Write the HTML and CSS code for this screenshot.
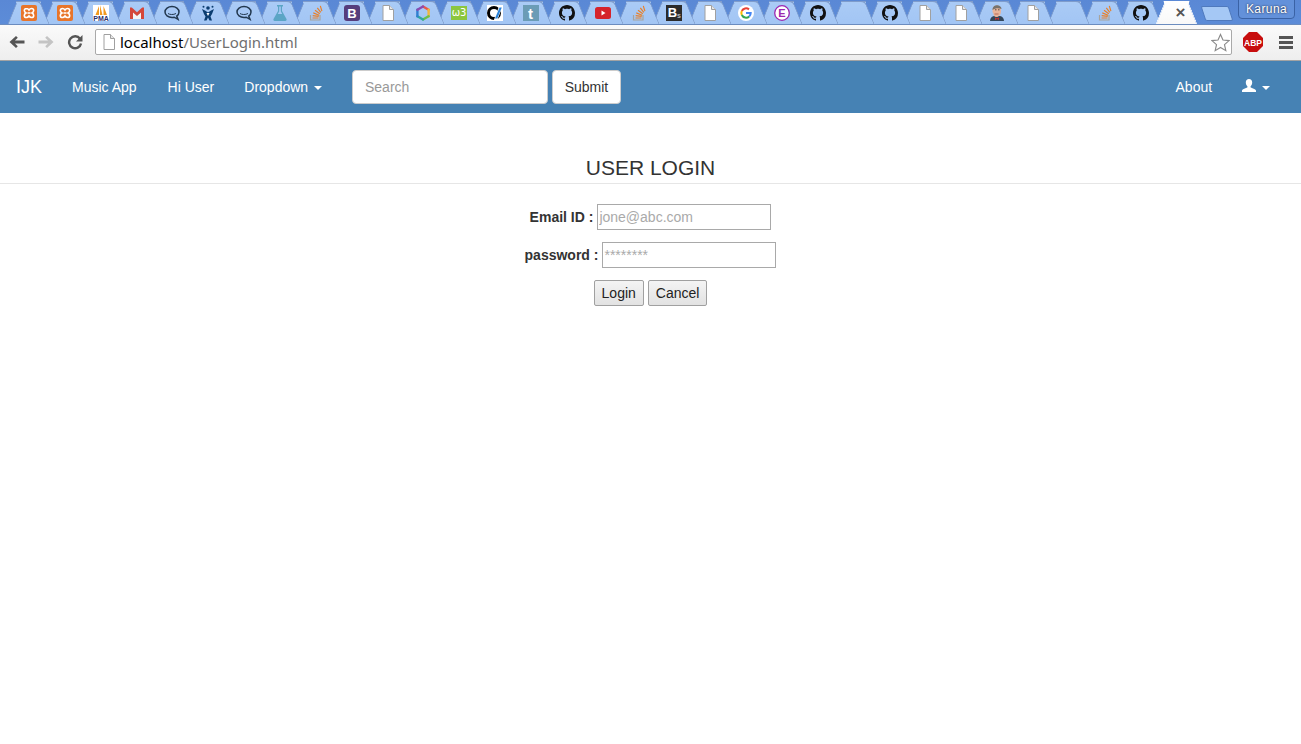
FILE: index.html
```html
<!DOCTYPE html>
<html lang="en">
   <head>
      <meta charset="UTF-8">
      <title>User Login</title>
      <link rel="stylesheet" href="styles.css">
   </head>
   <body>
      <svg class="sprite" xmlns="http://www.w3.org/2000/svg">
         <symbol id="i-xampp" viewBox="0 0 16 16">
            <rect width="16" height="16" rx="2" fill="#e8752a"/>
            <path d="M5.500 3.500c-1.400 0-2.200.9-2.200 2.100 0 1 .6 1.800 1.700 2.400-1.100.6-1.700 1.400-1.700 2.400 0 1.200.8 2.100 2.200 2.100 1.100 0 1.900-.6 2.500-1.500.6.900 1.400 1.500 2.500 1.500 1.400 0 2.200-.9 2.200-2.100 0-1-.6-1.800-1.700-2.400 1.100-.6 1.700-1.400 1.700-2.400 0-1.200-.8-2.100-2.200-2.100-1.100 0-1.900.6-2.500 1.500-.6-.9-1.400-1.500-2.500-1.500z" fill="none" stroke="#fff" stroke-width="1.600"/>
            <path d="M6.500 8h3" stroke="#fff" stroke-width="1.600"/>
         </symbol>
         <symbol id="i-gmail" viewBox="0 0 16 16">
            <path d="M4 14V7l4 3.500L12 7v7z" fill="#f4f4f4"/>
            <path d="M1 14V2.500h1.800L8 7.200l5.200-4.700H15V14h-3V7.500l-4 3.600-4-3.600V14z" fill="#d5473a"/>
         </symbol>
         <symbol id="i-chat" viewBox="0 0 16 16">
            <path d="M8 1.500c3.900 0 7 2.400 7 5.500 0 1.700-.9 3.100-2.300 4.100l1.300 3.200-3.800-2.100c-.7.200-1.400.300-2.200.300-3.900 0-7-2.400-7-5.500S4.100 1.500 8 1.500z" fill="none" stroke="#22384f" stroke-width="1.500"/>
            <path d="M4 8.500c1.500 1.200 5.500 1.500 8 0" fill="none" stroke="#22384f" stroke-width="1"/>
         </symbol>
         <symbol id="i-jira" viewBox="0 0 16 16">
            <circle cx="8" cy="3" r="1.800" fill="#0b3d70"/>
            <circle cx="3.500" cy="1.800" r="1" fill="#0b3d70"/>
            <circle cx="12.500" cy="1.800" r="1" fill="#0b3d70"/>
            <path d="M2 4l3 1.500 3 2 3-2L14 4l-2 5-1.500 2.500 1.500 4H9.500L8 12.500 6.500 15.500H4l1.500-4L4 9z" fill="#0b3d70"/>
            <path d="M6.500 8h3L8 11z" fill="#fff"/>
         </symbol>
         <symbol id="i-flask" viewBox="0 0 16 16">
            <path d="M5 0h6v1.500h-1V6l4.500 8c.5.900-.2 2-1.200 2H2.700c-1 0-1.700-1.100-1.200-2L6 6V1.500H5z" fill="#5ba5c5"/>
            <path d="M7.200 1.500h1.600v4.800L10.200 9H5.800l1.400-2.700z" fill="#a5c8f5"/>
         </symbol>
         <symbol id="i-so" viewBox="0 0 16 16">
            <path d="M2.500 10v5h9.500v-5" fill="none" stroke="#a8a49c" stroke-width="1.200"/>
            <path d="M4.500 13h6M4.700 10.600l6 .8M5.300 7.900l5.800 2.300M7 5.200l4.800 3.500M9.300 2.800l3.500 4.600M12.300 .8l1.600 5.400" fill="none" stroke="#e8802a" stroke-width="1.200"/>
         </symbol>
         <symbol id="i-doc" viewBox="0 0 16 16">
            <path d="M3 .5h6.500L13.500 4.500v11H3z" fill="#fff" stroke="#a0a0a0"/>
            <path d="M9.500 .5v4h4" fill="#e6e6e6" stroke="#a0a0a0"/>
         </symbol>
         <symbol id="i-hex" viewBox="0 0 16 16">
            <path d="M8 1.500 13.600 4.700" fill="none" stroke="#e8574a" stroke-width="2.400" stroke-linecap="round"/>
            <path d="M13.600 4.700V11.300" fill="none" stroke="#f2b63c" stroke-width="2.400" stroke-linecap="round"/>
            <path d="M13.600 11.300 8 14.500" fill="none" stroke="#6cbf4b" stroke-width="2.400" stroke-linecap="round"/>
            <path d="M8 14.500 2.400 11.300" fill="none" stroke="#2fa7a0" stroke-width="2.400" stroke-linecap="round"/>
            <path d="M2.400 11.300V4.700" fill="none" stroke="#2f7fd1" stroke-width="2.400" stroke-linecap="round"/>
            <path d="M2.400 4.700 8 1.500" fill="none" stroke="#8a4bb0" stroke-width="2.400" stroke-linecap="round"/>
         </symbol>
         <symbol id="i-slash" viewBox="0 0 16 16">
            <rect width="16" height="16" fill="#fff"/>
            <circle cx="7" cy="8" r="5.500" fill="none" stroke="#000" stroke-width="3"/>
            <path d="M6.500 16 12.500 0H16L10 16z" fill="#fff"/>
            <path d="M8 13.500 12.500 2.500h2.300L10.300 13.500z" fill="#2a82d8"/>
         </symbol>
         <symbol id="i-github" viewBox="0 0 16 16">
            <path fill="#111" d="M8 0C3.580 0 0 3.580 0 8c0 3.540 2.290 6.530 5.470 7.590.4.070.55-.17.55-.38 0-.19-.01-.82-.01-1.490-2.010.37-2.530-.49-2.690-.94-.09-.23-.48-.94-.82-1.130-.28-.15-.68-.52-.01-.53.63-.01 1.080.58 1.230.82.720 1.210 1.870.87 2.330.66.070-.52.280-.87.510-1.070-1.780-.2-3.640-.89-3.640-3.950 0-.87.310-1.590.820-2.150-.08-.2-.36-1.020.08-2.120 0 0 .67-.21 2.200.82.640-.18 1.320-.27 2-.27.680 0 1.360.09 2 .27 1.530-1.040 2.200-.82 2.200-.82.440 1.100.160 1.920.080 2.120.510.560.820 1.270.820 2.150 0 3.070-1.870 3.750-3.650 3.950.290.250.540.730.540 1.480 0 1.070-.01 1.930-.01 2.200 0 .21.150.46.550.38A8.013 8.013 0 0016 8c0-4.420-3.580-8-8-8z"/>
         </symbol>
         <symbol id="i-yt" viewBox="0 0 16 16">
            <rect y="2" width="16" height="12" rx="2.500" fill="#d5232b"/>
            <path d="M6.500 5.500 10.500 8l-4 2.500z" fill="#fff"/>
         </symbol>
         <symbol id="i-google" viewBox="0 0 16 16">
            <circle cx="8" cy="8" r="8" fill="#fff"/>
            <path d="M3.800 6A4.700 4.700 0 0 1 11 4.400" fill="none" stroke="#e94235" stroke-width="2"/>
            <path d="M3.800 10A4.700 4.700 0 0 1 3.800 6" fill="none" stroke="#fabb05" stroke-width="2"/>
            <path d="M11.200 11.400A4.700 4.700 0 0 1 3.800 10" fill="none" stroke="#34a853" stroke-width="2"/>
            <path d="M8 8h4.700a4.700 4.700 0 0 1-1.500 3.400" fill="none" stroke="#4285f4" stroke-width="2"/>
         </symbol>
         <symbol id="i-jenkins" viewBox="0 0 16 16">
            <path d="M1 16c0-3 2-4.500 4-5h6c2 .5 4 2 4 5z" fill="#33475b"/>
            <path d="M3.500 5c0-3 2-4.500 4.500-4.500S12 2.500 12 6s-2 6-4.500 6-3-2-3-3.500c-.7 0-1-1.500-1-3.500z" fill="#e8b49a"/>
            <path d="M3.500 5C3.500 1.500 6 .3 8 .3S12.500 1.500 12.500 4C10 3 6 3 3.500 5z" fill="#77736e"/>
            <path d="M6 4.800h1.500M9 4.800h1.500" stroke="#333" stroke-width=".8"/>
            <path d="M5.500 9h4" stroke="#a8584a" stroke-width=".8"/>
            <path d="M6 12.500 8 13.500l2-1v2.500l-2-1-2 1z" fill="#c9302c"/>
         </symbol>
         <symbol id="i-back" viewBox="0 0 16 16">
            <path d="M.5 8 7 2l1.800 1.700L6 6.500h9.500v3H6l2.800 2.800L7 14z"/>
         </symbol>
         <symbol id="i-forward" viewBox="0 0 16 16">
            <path d="M15.500 8 9 2 7.200 3.700 10 6.500H.5v3H10l-2.800 2.800L9 14z"/>
         </symbol>
         <symbol id="i-user" viewBox="0 0 14 14">
            <path d="M7 0c2 0 3.200 1.400 3.200 3.500 0 1.500-.7 3-1.600 3.800v1c0 .7 4.500 1.400 5.400 3.200V13H0v-1.500c.9-1.800 5.400-2.500 5.400-3.200v-1C4.500 6.500 3.800 5 3.800 3.500 3.800 1.400 5 0 7 0z"/>
         </symbol>
      </svg>

      <header class="chrome">
         <div class="tabstrip">
            <div class="tab"><svg class="ico"><use href="#i-xampp"/></svg></div>
            <div class="tab"><svg class="ico"><use href="#i-xampp"/></svg></div>
            <div class="tab">
               <svg class="ico" viewBox="0 0 16 16">
                  <rect width="16" height="16" fill="#fff"/>
                  <path d="M2.500 10 6 1v9zM7 10V0l2.500 10zM10.500 10V1l3.500 9z" fill="#f29a1f"/>
                  <text x="8" y="15.500" class="ico-text-pma" text-anchor="middle">PMA</text>
               </svg>
            </div>
            <div class="tab"><svg class="ico"><use href="#i-gmail"/></svg></div>
            <div class="tab"><svg class="ico"><use href="#i-chat"/></svg></div>
            <div class="tab"><svg class="ico"><use href="#i-jira"/></svg></div>
            <div class="tab"><svg class="ico"><use href="#i-chat"/></svg></div>
            <div class="tab"><svg class="ico"><use href="#i-flask"/></svg></div>
            <div class="tab"><svg class="ico"><use href="#i-so"/></svg></div>
            <div class="tab">
               <svg class="ico" viewBox="0 0 16 16">
                  <rect width="16" height="16" rx="3" fill="#563d7c"/>
                  <text x="8" y="13" class="ico-text-b" text-anchor="middle">B</text>
               </svg>
            </div>
            <div class="tab"><svg class="ico"><use href="#i-doc"/></svg></div>
            <div class="tab"><svg class="ico"><use href="#i-hex"/></svg></div>
            <div class="tab">
               <svg class="ico" viewBox="0 0 16 16">
                  <rect width="16" height="14" y="1" fill="#8cc63f"/>
                  <text x="8" y="10.500" class="ico-text-w3" text-anchor="middle">ω3</text>
               </svg>
            </div>
            <div class="tab"><svg class="ico"><use href="#i-slash"/></svg></div>
            <div class="tab">
               <svg class="ico" viewBox="0 0 16 16">
                  <rect width="16" height="16" fill="#6b9cb6"/>
                  <text x="7.500" y="13.500" class="ico-text-t" text-anchor="middle">t</text>
               </svg>
            </div>
            <div class="tab"><svg class="ico"><use href="#i-github"/></svg></div>
            <div class="tab"><svg class="ico"><use href="#i-yt"/></svg></div>
            <div class="tab"><svg class="ico"><use href="#i-so"/></svg></div>
            <div class="tab">
               <svg class="ico" viewBox="0 0 16 16">
                  <rect width="16" height="16" fill="#2b2b2b"/>
                  <text x="6.500" y="12" class="ico-text-b" text-anchor="middle">B</text>
                  <text x="13" y="13" class="ico-text-s" text-anchor="middle">s</text>
               </svg>
            </div>
            <div class="tab"><svg class="ico"><use href="#i-doc"/></svg></div>
            <div class="tab"><svg class="ico"><use href="#i-google"/></svg></div>
            <div class="tab">
               <svg class="ico" viewBox="0 0 16 16">
                  <circle cx="8" cy="8" r="7.300" fill="#fff" stroke="#9c27b0" stroke-width="1.300"/>
                  <text x="8" y="12" class="ico-text-e" text-anchor="middle">E</text>
               </svg>
            </div>
            <div class="tab"><svg class="ico"><use href="#i-github"/></svg></div>
            <div class="tab"></div>
            <div class="tab"><svg class="ico"><use href="#i-github"/></svg></div>
            <div class="tab"><svg class="ico"><use href="#i-doc"/></svg></div>
            <div class="tab"><svg class="ico"><use href="#i-doc"/></svg></div>
            <div class="tab"><svg class="ico"><use href="#i-jenkins"/></svg></div>
            <div class="tab"><svg class="ico"><use href="#i-doc"/></svg></div>
            <div class="tab"></div>
            <div class="tab"><svg class="ico"><use href="#i-so"/></svg></div>
            <div class="tab"><svg class="ico"><use href="#i-github"/></svg></div>
            <div class="tab tab-active"><span class="tab-close">×</span></div>
            <div class="newtab"></div>
            <div class="profile">Karuna</div>
         </div>
         <div class="toolbar">
            <svg class="tool-ico"><use href="#i-back"/></svg>
            <svg class="tool-ico tool-disabled"><use href="#i-forward"/></svg>
            <svg class="tool-ico" viewBox="0 0 16 16">
               <path d="M13 4.800A6 6 0 1 0 14 9.500" fill="none" stroke="#555" stroke-width="2.400"/>
               <path d="M15.500 1v6.500H9z" fill="#555"/>
            </svg>
            <div class="omnibox">
               <svg class="omni-doc"><use href="#i-doc"/></svg>
               <span class="url"><span class="url-host">localhost</span>/UserLogin.html</span>
               <svg class="star" viewBox="0 0 20 20">
                  <path d="M10 1.500 12.600 7.400 19 8 14.200 12.300 15.600 18.600 10 15.300 4.400 18.600 5.800 12.300 1 8 7.400 7.400z" fill="#fff" stroke="#8a8a8a" stroke-width="1.200"/>
               </svg>
            </div>
            <svg class="abp" viewBox="0 0 20 20">
               <path d="M6 0h8l6 6v8l-6 6H6l-6-6V6z" fill="#c70d0d"/>
               <text x="10" y="13.500" class="abp-text" text-anchor="middle">ABP</text>
            </svg>
            <div class="menu-btn"><i></i><i></i><i></i></div>
         </div>
      </header>

      <nav class="navbar">
         <a class="brand">IJK</a>
         <a class="nav-link nav-link-wide">Music App</a>
         <a class="nav-link">Hi User</a>
         <a class="nav-link">Dropdown <b class="caret"></b></a>
         <form class="nav-form">
            <input class="nav-search" type="text" placeholder="Search">
            <button class="nav-submit" type="button">Submit</button>
         </form>
         <div class="nav-right">
            <a class="nav-link">About</a>
            <a class="nav-link"><svg class="user-ico"><use href="#i-user"/></svg> <b class="caret"></b></a>
         </div>
      </nav>

      <main>
         <h3 class="login-title">USER LOGIN</h3>
         <hr class="login-rule">
         <form class="login-form">
            <div class="login-row">
               <label class="login-label">Email ID :</label>
               <input class="login-input" type="text" placeholder="jone@abc.com">
            </div>
            <div class="login-row">
               <label class="login-label">password :</label>
               <input class="login-input" type="password" placeholder="********">
            </div>
            <div class="login-row">
               <button class="login-btn" type="button">Login</button>
               <button class="login-btn" type="button">Cancel</button>
            </div>
         </form>
      </main>
   </body>
</html>
```

FILE: styles.css
```css
body {
margin: 0;
font-family: "Liberation Sans", Arial, sans-serif;
font-size: 14px;
line-height: 20px;
color: #333;
background: #fff;
}
.sprite {
position: absolute;
width: 0;
height: 0;
}
.ico-text-pma {
font: bold 7px "Liberation Sans", sans-serif;
fill: #2b2f6b;
}
.ico-text-b {
font: bold 13px "Liberation Sans", sans-serif;
fill: #fff;
}
.ico-text-s {
font: bold 7px "Liberation Sans", sans-serif;
fill: #bbb;
}
.ico-text-w3 {
font: 10px "DejaVu Sans", sans-serif;
fill: #fff;
}
.ico-text-t {
font: bold 15px "Liberation Sans", sans-serif;
fill: #fff;
}
.ico-text-e {
font: bold 11px "Liberation Sans", sans-serif;
fill: #9c27b0;
}

/* browser window */
.chrome {
height: 60px;
border-bottom: 1px solid #a3a3a3;
}
.tabstrip {
display: flex;
position: relative;
isolation: isolate;
height: 25px;
box-sizing: border-box;
padding-left: 7px;
background: linear-gradient(#5a88d5, #5c8cd8);
border-bottom: 1px solid #6b8cbf;
overflow: hidden;
}
.tab {
position: relative;
flex: none;
display: flex;
align-items: center;
justify-content: center;
width: 43.870px;
height: 24px;
margin-right: -8px;
}
.tab::before,
.tab::after {
content: "";
position: absolute;
top: 1px;
bottom: 0;
width: 58%;
background: linear-gradient(#aacbf6, #a2c5f4);
border-top: 1px solid #7f9ccb;
box-sizing: border-box;
}
/* left halves go under the right half of the tab before */
.tab::before {
z-index: -1;
left: 5px;
transform: skewX(-22deg);
border-left: 1px solid #7f9ccb;
border-top-left-radius: 5px;
}
.tab::after {
right: 5px;
transform: skewX(22deg);
border-right: 1px solid #7f9ccb;
border-top-right-radius: 5px;
}
.ico {
position: relative;
z-index: 1;
width: 16px;
height: 16px;
margin-top: 2px;
}
.tab-active {
z-index: 2;
height: 25px;
}
.tab-active::before,
.tab-active::after {
background: linear-gradient(#fff, #f8f8f8);
border-color: #fff;
}
.tab-close {
position: relative;
z-index: 1;
margin-left: 8px;
font-size: 17px;
font-weight: bold;
color: #555;
}
.newtab {
flex: none;
width: 26px;
height: 13px;
margin: 6px 0 0 13px;
background: #a5c8f5;
border: 1px solid #4f79bd;
border-radius: 2px;
transform: skewX(18deg);
}
.profile {
position: absolute;
top: -1px;
right: 6px;
width: 57px;
height: 20px;
box-sizing: border-box;
border: 1px solid #3a62a5;
border-radius: 0 0 4px 4px;
background: #6391da;
color: #fff;
font-size: 12px;
line-height: 19px;
letter-spacing: .4px;
text-align: center;
text-shadow: 0 0 2px #112;
}
.toolbar {
display: flex;
align-items: center;
box-sizing: border-box;
height: 35px;
padding: 0 0 1px 9px;
background: linear-gradient(#fafafa, #eeeeee);
}
.tool-ico {
flex: none;
width: 16px;
height: 16px;
margin-right: 13px;
fill: #555;
}
.tool-disabled {
fill: #c4c4c4;
}
.omnibox {
flex: none;
display: flex;
align-items: center;
box-sizing: border-box;
width: 1137px;
height: 26px;
margin-left: -1px;
padding: 0 1px 0 5px;
background: #fff;
border: 1px solid #a9a9a9;
border-radius: 2px;
}
.omni-doc {
flex: none;
width: 16px;
height: 16px;
margin-right: 3px;
}
.url {
flex: 1;
font-family: "Noto Sans", sans-serif;
font-size: 15px;
color: #6f6f6f;
}
.url-host {
color: #000;
}
.star {
flex: none;
width: 19px;
height: 19px;
}
.abp {
flex: none;
width: 20px;
height: 20px;
margin-left: 11px;
}
.abp-text {
font: bold 8.500px "Liberation Sans", sans-serif;
fill: #fff;
}
.menu-btn {
display: flex;
flex-direction: column;
gap: 2px;
margin-left: 16px;
}
.menu-btn i {
display: block;
width: 14px;
height: 3px;
background: #555;
}

/* navbar */
.navbar {
display: flex;
align-items: center;
height: 52px;
background: #4682b4;
color: #fff;
}
.brand {
padding: 0 15px 0 16px;
font-size: 18px;
}
.nav-link {
padding: 0 15px;
color: #fff;
}
.nav-link-wide {
padding-right: 16px;
}
.caret {
display: inline-block;
width: 0;
height: 0;
margin-left: 2px;
vertical-align: middle;
border-top: 4px solid #fff;
border-left: 4px solid transparent;
border-right: 4px solid transparent;
}
.nav-form {
display: flex;
gap: 4px;
margin-left: 15px;
}
.nav-search {
box-sizing: border-box;
width: 196px;
height: 34px;
padding: 6px 12px;
font: 14px "Liberation Sans", Arial, sans-serif;
color: #555;
border: 1px solid #ccc;
border-radius: 4px;
}
.nav-search::placeholder {
color: #999;
}
.nav-submit {
box-sizing: border-box;
width: 69px;
height: 34px;
font: 14px "Liberation Sans", Arial, sans-serif;
color: #333;
background: #fff;
border: 1px solid #ccc;
border-radius: 4px;
}
.nav-right {
display: flex;
align-items: center;
margin-left: auto;
padding-right: 16px;
}
.user-ico {
width: 14px;
height: 14px;
fill: #fff;
vertical-align: -1px;
}

/* login form */
.login-title {
margin: 0;
padding-top: 43px;
font-size: 21px;
font-weight: 400;
line-height: 23px;
text-align: center;
}
.login-rule {
margin: 4px 0 20px;
border: 0;
border-top: 1px solid #e6e6e6;
}
.login-row {
display: flex;
justify-content: center;
align-items: center;
gap: 4px;
margin-bottom: 12px;
}
.login-label {
font-weight: bold;
}
.login-input {
box-sizing: border-box;
width: 174px;
height: 26px;
padding: 1px;
font: 14px "Liberation Sans", Arial, sans-serif;
border: 1px solid #a9a9a9;
}
.login-input::placeholder {
color: #aaa;
}
.login-btn {
box-sizing: border-box;
height: 26px;
padding: 1px 7px;
font: 14px "Liberation Sans", Arial, sans-serif;
color: #222;
background: linear-gradient(#f4f4f4, #e2e2e2);
border: 1px solid #a0a0a0;
border-radius: 2px;
}
```
